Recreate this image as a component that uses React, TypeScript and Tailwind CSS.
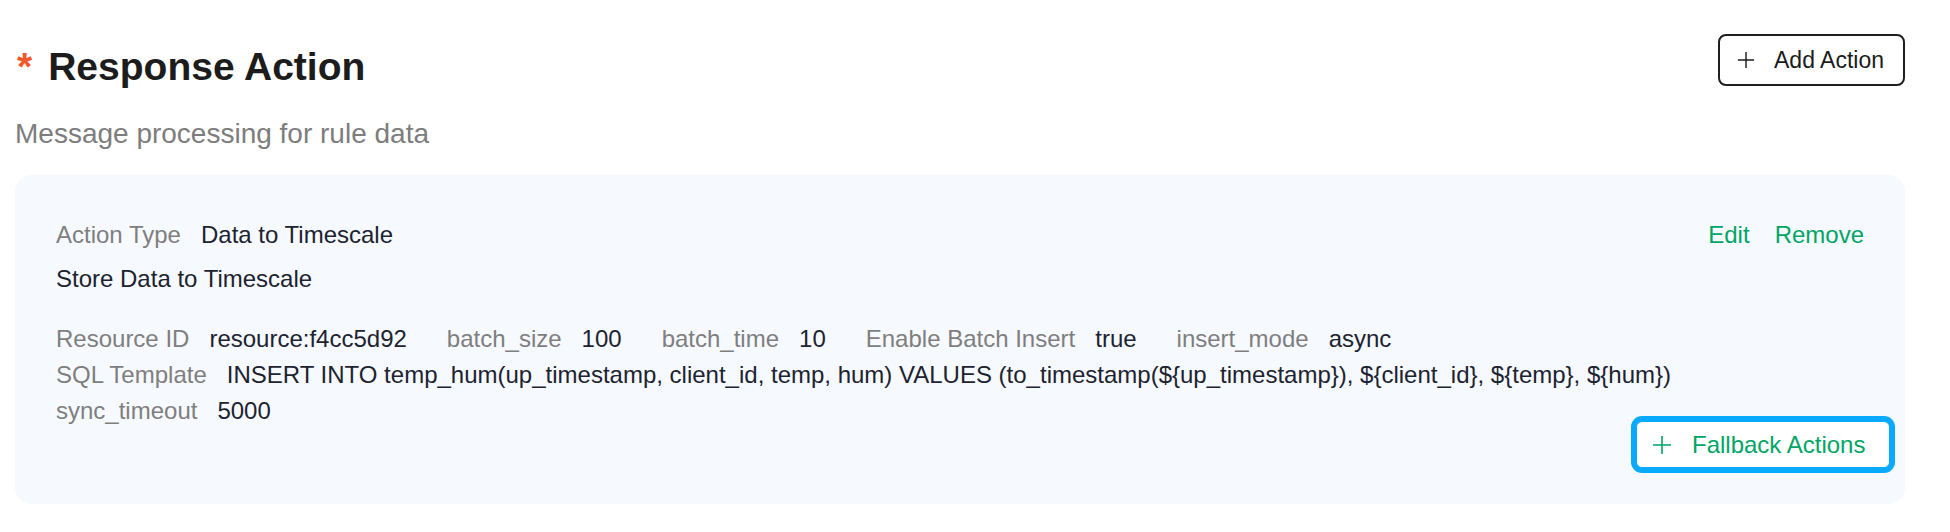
import React from "react";

const Plus = ({ className }: { className?: string }) => (
  <svg viewBox="0 0 20 20" className={className} fill="none" stroke="currentColor" strokeWidth={1.6}>
    <path d="M10 1v18M1 10h18" />
  </svg>
);

function Field({ label, value }: { label: string; value: string }) {
  return (
    <div className="flex whitespace-nowrap">
      <span className="text-[#7f7f7f]">{label}</span>
      <span className="ml-[20px] text-[#1d2330]">{value}</span>
    </div>
  );
}

export default function App() {
  return (
    <div className="min-h-[532px] w-full bg-white pl-[15px] pr-[45px] pt-[34px] font-['Liberation_Sans',Arial,sans-serif]">
      <div className="flex items-start justify-between">
        <div className="mt-[9px] flex items-start text-[39px] font-bold leading-[48px] text-[#1c1c1c]">
          <span className="ml-[2px] mr-[16px] text-[#f2572b]">*</span>
          <h1>Response Action</h1>
        </div>
        <button className="flex h-[52px] w-[187px] items-center rounded-[8px] border-2 border-[#1f1f1f] pl-[17px] text-[23px] text-[#1c1c1c]">
          <Plus className="h-[18px] w-[18px]" />
          <span className="ml-[19px]">Add Action</span>
        </button>
      </div>
      <p className="mt-[23px] text-[28px] leading-[40px] text-[#7d7d7d]">Message processing for rule data</p>
      <div className="mt-[21px] rounded-[16px] bg-[#f6f9fe] px-[41px] pb-[36px] pt-[42px] text-[24px] leading-[36px]">
        <div className="flex justify-between">
          <Field label="Action Type" value="Data to Timescale" />
          <div className="flex gap-[25px] text-[#00a566]">
            <span>Edit</span>
            <span>Remove</span>
          </div>
        </div>
        <div className="mt-[8px] text-[#1d2330]">Store Data to Timescale</div>
        <div className="mt-[24px]">
          <div className="flex gap-x-[40px]">
            <Field label="Resource ID" value="resource:f4cc5d92" />
            <Field label="batch_size" value="100" />
            <Field label="batch_time" value="10" />
            <Field label="Enable Batch Insert" value="true" />
            <Field label="insert_mode" value="async" />
          </div>
          <Field
            label="SQL Template"
            value={"INSERT INTO temp_hum(up_timestamp, client_id, temp, hum) VALUES (to_timestamp(${up_timestamp}), ${client_id}, ${temp}, ${hum})"}
          />
          <Field label="sync_timeout" value="5000" />
        </div>
        <div className="-mr-[26px] -mt-[8px] flex justify-end">
          <button className="flex h-[47px] w-[254px] items-center rounded-[6px] border border-[#08aaff] bg-white pl-[15px] text-[24px] text-[#00a566] ring-[5px] ring-[#08aaff]">
            <Plus className="h-[20px] w-[20px]" />
            <span className="ml-[20px]">Fallback Actions</span>
          </button>
        </div>
      </div>
    </div>
  );
}
